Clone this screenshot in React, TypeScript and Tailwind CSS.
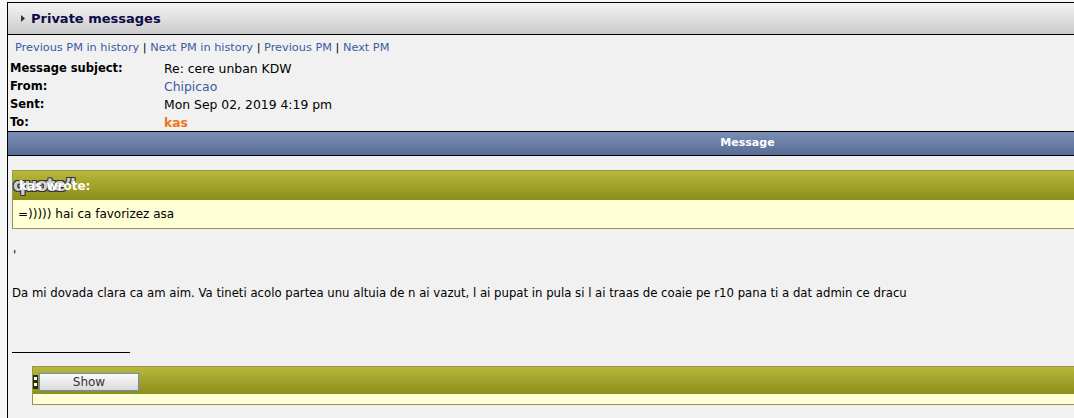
import React from "react";

const rows = [
  { label: "Message subject:", value: <span>Re: cere unban KDW</span> },
  { label: "From:", value: <span className="text-[#3b5ba3]">Chipicao</span> },
  { label: "Sent:", value: <span>Mon Sep 02, 2019 4:19 pm</span> },
  { label: "To:", value: <span className="font-bold text-[#f07518]">kas</span> },
];

const navLinks = ["Previous PM in history", "Next PM in history", "Previous PM", "Next PM"];

const App = () => {
  return (
    <div className="w-[1074px] h-[418px] overflow-hidden bg-[#f7f7f7] font-['DejaVu_Sans',Verdana,sans-serif] text-black">
      <div className="ml-[7px] mt-[2px] w-[1480px] h-[420px] border-l border-t border-black bg-[#f1f1f1]">
        {/* page title bar */}
        <div className="h-[32px] border-b border-black bg-gradient-to-b from-[#f4f4f4] to-[#cbcbcb] flex items-center pl-[13px] gap-[6px]">
          <svg width="4" height="7" viewBox="0 0 4 7">
            <path d="M0 0 L4 3.5 L0 7 Z" fill="#333" />
          </svg>
          <span className="text-[13px] font-bold text-[#0c0c4a] leading-none">Private messages</span>
        </div>

        <div className="pt-[5px] pl-[7px] text-[11.3px] leading-[15px] text-[#3b5ba3]">
          {navLinks.map((l, i) => (
            <span key={l}>
              {i > 0 && <span className="text-black"> | </span>}
              {l}
            </span>
          ))}
        </div>

        <div className="mt-[5px] mb-[-1px]">
          {rows.map((r) => (
            <div key={r.label} className="h-[18px] flex items-center">
              <div className="w-[156px] pl-[2px] text-[11.5px] font-bold">{r.label}</div>
              <div className="text-[12.4px]">{r.value}</div>
            </div>
          ))}
        </div>

        {/* message header */}
        <div className="h-[25px] border-y border-black bg-gradient-to-b from-[#7b8eb6] to-[#586d95] flex items-center justify-center">
          <span className="text-[11px] font-bold text-white">Message</span>
        </div>

        <div className="pl-[4px]">
          {/* quote block */}
          <div className="mt-[14px] border border-[#96964a]">
            <div className="relative h-[29px] bg-gradient-to-b from-[#b7b83a] to-[#8d8d1b]">
              <span className="absolute left-0 top-[4px] text-[18px] font-bold leading-[20px] text-[#cfcfcf] [text-shadow:1px_1px_0_#333,-1px_-1px_0_#333,1px_-1px_0_#333,-1px_1px_0_#333] tracking-[-1.5px]">
                quote”
              </span>
              <span className="absolute left-[6px] top-[7px] text-[12px] font-bold text-white leading-[16px]">
                kas wrote:
              </span>
            </div>
            <div className="h-[28px] bg-[#ffffd6] flex items-center pl-[5px] text-[12px]">
              =))))) hai ca favorizez asa
            </div>
          </div>

          <div className="mt-[17px] text-[12px] leading-[19px] pl-[1px]">'</div>
          <div className="mt-[19px] text-[11.7px] leading-[19px]">
            Da mi dovada clara ca am aim. Va tineti acolo partea unu altuia de n ai vazut, l ai pupat in pula si l ai traas de coaie pe r10 pana ti a dat admin ce dracu
          </div>

          {/* signature */}
          <div className="mt-[49px] w-[118px] h-px bg-black" />

          <div className="ml-[20px] mt-[13px] border border-[#96964a]">
            <div className="h-[27px] bg-gradient-to-b from-[#b7b83a] to-[#8d8d1b] flex items-center">
              <svg width="5" height="14" viewBox="0 0 5 14" className="mt-[2px]">
                <rect x="0" y="0" width="5" height="14" fill="#2a2a10" />
                <rect x="1" y="2" width="3" height="3" fill="#fff" />
                <rect x="1" y="8" width="3" height="3" fill="#fff" />
              </svg>
              <button className="ml-px mt-[2px] w-[100px] h-[18px] border border-[#6a8dc0] bg-gradient-to-b from-[#fbfbfb] to-[#dadada] text-[12px] text-[#333] leading-none">
                Show
              </button>
            </div>
            <div className="h-[10px] bg-[#ffffd6]" />
          </div>
        </div>
      </div>
    </div>
  );
};

export default App;
